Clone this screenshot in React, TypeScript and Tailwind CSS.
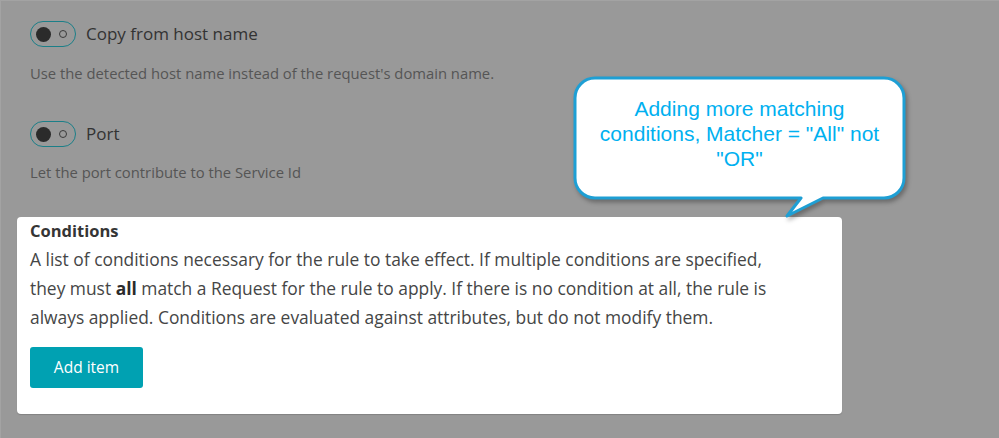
import React from "react"

function Toggle() {
  return (
    <div className="flex h-[26px] w-[46px] shrink-0 items-center justify-between rounded-full border-[1.5px] border-[#1b7f88] pl-[5px] pr-[8px]">
      <span className="h-[15px] w-[15px] rounded-full bg-[#2b2b2b]" />
      <span className="h-[8px] w-[8px] rounded-full border-[1.5px] border-[#3a3a3a]" />
    </div>
  )
}

function Callout() {
  return (
    <div className="absolute left-[565px] top-[68px] h-[155px] w-[350px]">
      <svg width="350" height="155" viewBox="0 0 350 155" className="absolute inset-0 drop-shadow-[2px_3px_2px_rgba(0,0,0,0.3)]">
        <path
          d="M29,9 H318 A20,20 0 0 1 338,29 V109 A20,20 0 0 1 318,129 H257 L221,147 L235,129 H29 A20,20 0 0 1 9,109 V29 A20,20 0 0 1 29,9 Z"
          fill="#ffffff"
          stroke="#1e9fd4"
          strokeWidth="3"
          strokeLinejoin="round"
        />
      </svg>
      <div className="relative ml-[9px] w-[329px] pt-[27px] text-center font-['Liberation_Sans',Arial,sans-serif] text-[21px] leading-[25px] text-[#00b0f0]">
        Adding more matching
        <br />
        conditions, Matcher = "All" not
        <br />
        "OR"
      </div>
    </div>
  )
}

export default function App() {
  return (
    <div className="relative h-[438px] w-[999px] overflow-hidden border-l border-t border-[#a3a3a3] bg-[#999999] font-['Open_Sans',sans-serif]">
      <div className="pl-[29px] pt-[20px]">
        <div className="flex items-center gap-[10px]">
          <Toggle />
          <span className="text-[17px] leading-[26px] text-[#333333]">Copy from host name</span>
        </div>
        <p className="mt-[16px] text-[14.8px] leading-[20px] text-[#555555]">
          Use the detected host name instead of the request's domain name.
        </p>
        <div className="mt-[38px] flex items-center gap-[10px]">
          <Toggle />
          <span className="text-[17px] leading-[26px] text-[#333333]">Port</span>
        </div>
        <p className="mt-[15px] text-[14.8px] leading-[20px] text-[#555555]">
          Let the port contribute to the Service Id
        </p>
      </div>

      <div className="ml-[16px] mt-[35px] h-[197px] w-[825px] rounded-[4px] bg-white px-[13px] pt-[3px] shadow-[0_1px_1px_rgba(0,0,0,0.15)]">
        <h3 className="text-[16.5px] font-bold leading-[22px] text-[#353535]">Conditions</h3>
        <p className="mt-[3px] whitespace-nowrap text-[17.4px] leading-[29px] text-[#454646]">
          A list of conditions necessary for the rule to take effect. If multiple conditions are specified,
          <br />
          they must <b className="font-bold text-[#2b2b2b]">all</b> match a Request for the rule to apply. If there is no condition at all, the rule is
          <br />
          always applied. Conditions are evaluated against attributes, but do not modify them.
        </p>
        <button className="mt-[15px] h-[41px] w-[113px] rounded-[3px] bg-[#00a1b2] text-[15.5px] text-white">
          Add item
        </button>
      </div>

      <Callout />
    </div>
  )
}
